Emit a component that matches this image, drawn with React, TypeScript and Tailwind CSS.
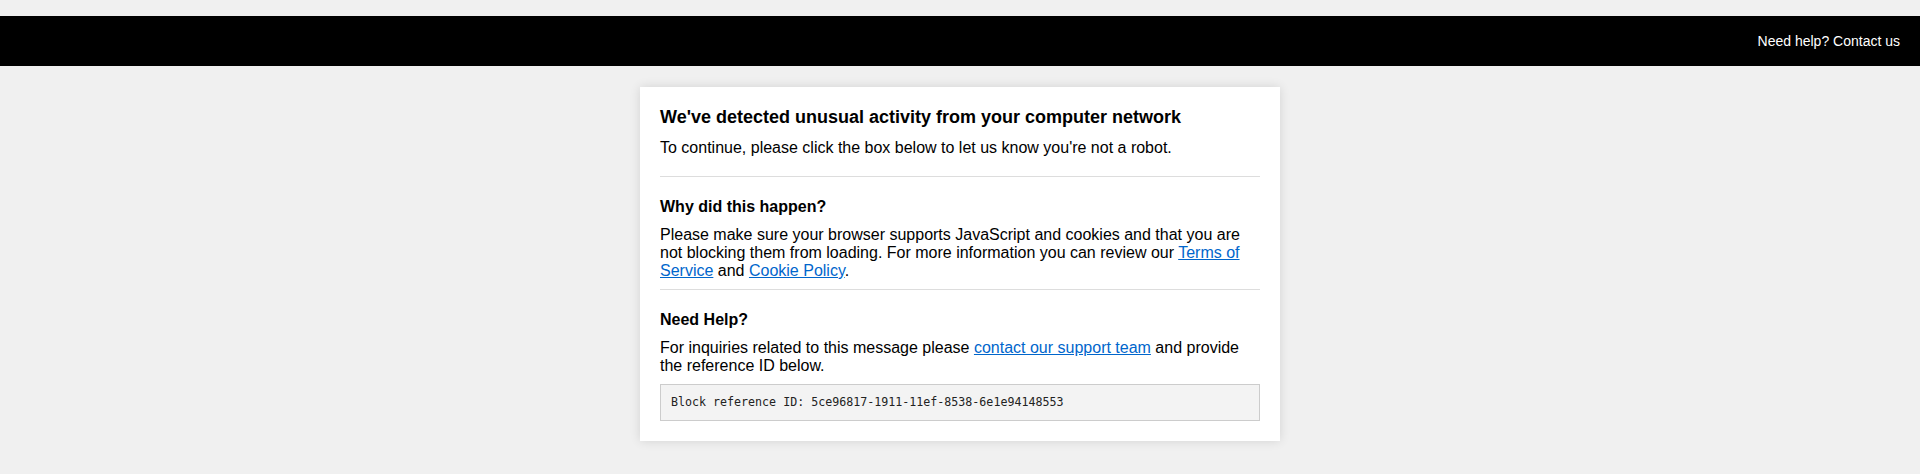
import React from 'react';

const linkClass = 'text-[#0066cc] underline';

const App = () => {
    return (
        <div className="min-h-[474px] bg-[#f0f0f0] pt-4 pb-8 font-['Liberation_Sans',Arial,sans-serif] leading-[normal] text-black">
            <header className="h-[50px] bg-black flex items-center justify-end px-5">
                <a className="text-white text-[14px] leading-[normal]">Need help? Contact us</a>
            </header>

            <main className="mt-[21px] mx-auto w-[640px] bg-white px-5 shadow-[0_0_10px_rgba(0,0,0,0.12)]">
                <section className="pt-5 pb-[19px] border-b border-[#dddddd]">
                    <h1 className="text-[18px] leading-[normal] font-bold mb-[11px]">We've detected unusual activity from your computer network</h1>
                    <p className="text-[16px] leading-[normal]">To continue, please click the box below to let us know you're not a robot.</p>
                </section>

                <section className="pt-[21px] pb-[9px] border-b border-[#dddddd]">
                    <h2 className="text-[16px] leading-[normal] font-bold mb-2.5">Why did this happen?</h2>
                    <p className="text-[16px] leading-[normal]">
                        Please make sure your browser supports JavaScript and cookies and that you are not blocking them from loading. For more information you can review our{' '}
                        <a className={linkClass}>Terms of Service</a> and <a className={linkClass}>Cookie Policy</a>.
                    </p>
                </section>

                <section className="pt-[21px] pb-5">
                    <h2 className="text-[16px] leading-[normal] font-bold mb-2.5">Need Help?</h2>
                    <p className="text-[16px] leading-[normal]">
                        For inquiries related to this message please <a className={linkClass}>contact our support team</a> and provide the reference ID below.
                    </p>
                    <div className="mt-[9px] border border-[#cccccc] bg-[#f3f3f3] px-[10px] py-[10px] font-['DejaVu_Sans_Mono',monospace] text-[11.65px] leading-[15px] text-[#222222]">
                        Block reference ID: 5ce96817-1911-11ef-8538-6e1e94148553
                    </div>
                </section>
            </main>
        </div>
    );
};

export default App;
